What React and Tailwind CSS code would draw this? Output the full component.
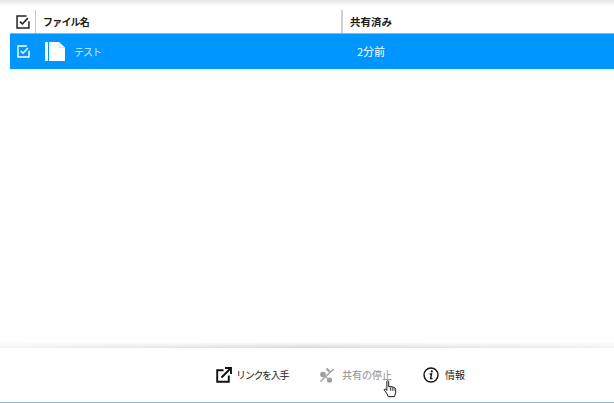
const font = { fontFamily: '"Noto Sans CJK JP", "Liberation Sans", sans-serif' };

function Check({ color, size }) {
  return (
    <svg width={size} height={size} viewBox="0 0 16 16" fill="none" className="block">
      <path d="M12 1.2H1.2V14.8H14.8V7" stroke={color} strokeWidth="1.7" />
      <path d="M4.5 7.5L7.3 10.2L13.5 3.6" stroke={color} strokeWidth="1.8" />
    </svg>
  );
}

function FileIcon() {
  return (
    <svg width="21" height="19" viewBox="0 0 21 19" className="block">
      <rect x="1" y="0" width="3" height="19" fill="#fff" />
      <path d="M5 0H15L21 5.5V19H5Z" fill="#fff" />
      <path d="M15 0V5.5H21" fill="none" stroke="#bfe6ff" strokeWidth="1" />
    </svg>
  );
}

function LinkIcon() {
  return (
    <svg width="16" height="16" viewBox="0 0 16 16" fill="none" className="block">
      <path d="M7.5 3.2H1.2V14.8H12.8V8.5" stroke="#111" strokeWidth="1.9" />
      <path d="M5.5 10.5L14 2" stroke="#111" strokeWidth="1.9" />
      <path d="M9 1H15V7" stroke="#111" strokeWidth="1.9" />
    </svg>
  );
}

function StopShareIcon() {
  return (
    <svg width="14" height="16" viewBox="0 0 14 16" fill="none" className="block">
      <circle cx="3" cy="7.5" r="2.8" fill="#9a9a9a" />
      <circle cx="9.5" cy="13" r="2.6" fill="#9a9a9a" />
      <path d="M3 7.5L9.5 13" stroke="#a8a8a8" strokeWidth="1.2" />
      <path d="M0.5 14.5L13.5 2" stroke="#a8a8a8" strokeWidth="1.6" />
      <path d="M6.5 1.5L9.5 4.5" stroke="#a0a0a0" strokeWidth="2.2" />
    </svg>
  );
}

function InfoIcon() {
  return (
    <svg width="16" height="16" viewBox="0 0 16 16" fill="none" className="block">
      <circle cx="8" cy="8" r="7" stroke="#111" strokeWidth="1.4" />
      <circle cx="8.8" cy="4.4" r="1.1" fill="#111" />
      <path d="M6.6 7H8.6L7.6 11.6H9.6" stroke="#111" strokeWidth="1.4" />
    </svg>
  );
}

function HandCursor() {
  return (
    <svg width="14" height="18" viewBox="0 0 14 20" className="block">
      <path
        d="M3.5 1.5C3.5.7 5.5.7 5.5 1.5V7.5L7.5 7.2L9.5 7.6L12 8.4C13 8.8 13.3 9.5 13.3 10.5V14L12 18.5H5L3.8 15.5L.7 11.2C.2 10.2 1.4 9.4 2.2 10.2L3.5 11.7Z"
        fill="#fff"
        stroke="#000"
        strokeWidth="1"
      />
      <path d="M7.5 8V12M9.5 8V12M11.5 8.5V12" stroke="#000" strokeWidth="0.8" />
    </svg>
  );
}

export default function App() {
  return (
    <div className="relative flex h-[403px] w-[614px] flex-col overflow-hidden bg-white" style={font}>
      <div className="h-[6px] bg-gradient-to-b from-[#e4e4e4] to-white" />
      <div className="ml-[10px] mt-[4px] flex h-[23px] items-stretch">
        <div className="flex w-[25px] items-center justify-center pl-[1px]">
          <Check color="#222" size={14} />
        </div>
        <div className="flex w-[306px] items-center border-l border-[#c8c8c8] pl-[7px] text-[10px] font-bold tracking-[-0.8px] text-[#1a1a1a]">
          ファイル名
        </div>
        <div className="flex flex-1 items-center border-l-2 border-[#d0d0d0] pl-[7px] text-[10.5px] font-bold text-[#1a1a1a]">
          共有済み
        </div>
      </div>
      <div className="ml-[10px] flex h-[36px] items-center border-t border-[#66bfff] bg-[#0096ff] text-white">
        <div className="flex w-[25px] items-center justify-center pl-[1px]">
          <Check color="#fff" size={13} />
        </div>
        <div className="ml-[9px] flex w-[313px] items-center gap-[9px]">
          <FileIcon />
          <span className="text-[10px] tracking-[-1px] text-[#d5eeff]">テスト</span>
        </div>
        <span className="text-[11px]">2分前</span>
      </div>
      <div className="flex-1" />
      <div className="h-[6px] bg-gradient-to-b from-white to-[#d8d8d8] [mask-image:linear-gradient(to_right,rgba(0,0,0,0.3),#000_50%,rgba(0,0,0,0.35))]" />
      <div className="flex h-[55px] items-center border-b border-[#9db5c8] pl-[216px]">
        <div className="flex w-[104px] items-center gap-[4px]">
          <LinkIcon />
          <span className="text-[10px] leading-none tracking-[-1.3px] text-[#222]">リンクを入手</span>
        </div>
        <div className="flex w-[103px] items-center gap-[8px]">
          <StopShareIcon />
          <span className="text-[10px] leading-none text-[#8c8c8c]">共有の停止</span>
        </div>
        <div className="flex items-center gap-[6px]">
          <InfoIcon />
          <span className="text-[10px] leading-none text-[#222]">情報</span>
        </div>
      </div>
      <div className="absolute left-[383px] top-[380px]">
        <HandCursor />
      </div>
    </div>
  );
}
